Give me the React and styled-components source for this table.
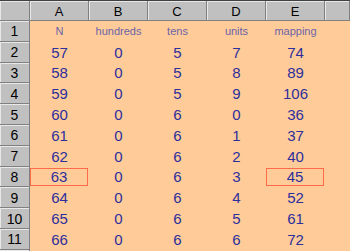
import React from 'react';
import styled, { createGlobalStyle } from 'styled-components';

const GlobalStyle = createGlobalStyle`
  html, body {
    margin: 0;
    padding: 0;
    background: #ffcc99;
    overflow: hidden;
  }
`;

const Sheet = styled.div`
  display: grid;
  grid-template-columns: 30px repeat(5, 59px) 1fr;
  grid-template-rows: 20px repeat(11, 20.8px) 1fr;
  width: 350px;
  height: 251px;
  font-family: 'Liberation Sans', Arial, sans-serif;
  border-top: 1px solid #404040;
  box-sizing: border-box;
  overflow: hidden;
`;

const HeaderCell = styled.div`
  display: flex;
  align-items: center;
  justify-content: center;
  background: #c0c0c0;
  color: #000;
  font-size: ${(p) => (p.row ? 14 : 13)}px;
  border-right: 1px solid #808080;
  border-bottom: 1px solid #808080;
  box-shadow: inset 1px 1px 0 #e8e8e8;
  box-sizing: border-box;
  padding-top: 1px;
`;

const Cell = styled.div`
  display: flex;
  align-items: center;
  justify-content: center;
  background: #ffcc99;
  color: ${(p) => (p.label ? '#6b63a8' : '#2e2e9c')};
  font-size: ${(p) => (p.label ? 11 : 15)}px;
  box-sizing: border-box;
  border: 1px solid ${(p) => (p.marked ? '#ff6a4a' : 'transparent')};
  margin: ${(p) => (p.marked ? '1px 1px 1px 0' : '0')};
`;

const columns = ['A', 'B', 'C', 'D', 'E'];
const labels = ['N', 'hundreds', 'tens', 'units', 'mapping'];

const rows = [
  [57, 0, 5, 7, 74],
  [58, 0, 5, 8, 89],
  [59, 0, 5, 9, 106],
  [60, 0, 6, 0, 36],
  [61, 0, 6, 1, 37],
  [62, 0, 6, 2, 40],
  [63, 0, 6, 3, 45],
  [64, 0, 6, 4, 52],
  [65, 0, 6, 5, 61],
  [66, 0, 6, 6, 72],
];

export default function App() {
  return (
    <>
      <GlobalStyle />
      <Sheet>
        <HeaderCell />
        {columns.map((c) => (
          <HeaderCell key={c}>{c}</HeaderCell>
        ))}
        <HeaderCell />

        <HeaderCell row>1</HeaderCell>
        {labels.map((l) => (
          <Cell key={l} label>
            {l}
          </Cell>
        ))}
        <Cell />

        {rows.map((r, i) => (
          <React.Fragment key={i}>
            <HeaderCell row>{i + 2}</HeaderCell>
            {r.map((v, j) => (
              <Cell key={j} marked={v === 63 || v === 45}>
                {v}
              </Cell>
            ))}
            <Cell />
          </React.Fragment>
        ))}
        {/* next row, scrolled mostly out of view */}
        <HeaderCell row />
      </Sheet>
    </>
  );
}
